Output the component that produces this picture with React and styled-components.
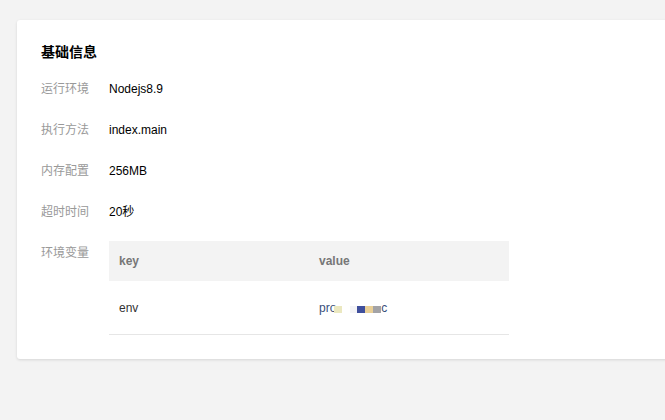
import styled, { createGlobalStyle } from "styled-components"

const Global = createGlobalStyle`
html, body {
  margin: 0;
  padding: 0;
  background: #f3f3f3;
  overflow: hidden;
}
body {
  font-family: "Liberation Sans", "Noto Sans CJK SC", sans-serif;
  font-size: 12px;
  color: #000;
}
`

const Page = styled.div`
padding: 20px 0 0 17px;
width: 720px;
height: 420px;
box-sizing: border-box;
`

const Card = styled.div`
background: #fff;
border-radius: 3px;
box-shadow: 0 1px 3px rgba(0, 0, 0, 0.12);
padding: 21px 24px 24px 24px;
`

const Title = styled.h3`
margin: 0 0 16px 0;
font-size: 14px;
line-height: 22px;
font-weight: 700;
color: #000;
`

const Row = styled.div`
display: flex;
align-items: flex-start;
line-height: 20px;
margin-bottom: ${p => (p.$last ? 0 : 21)}px;
`

const Label = styled.div`
width: 68px;
flex: none;
color: #999;
`

const Value = styled.div`
color: #000;
`

const Table = styled.div`
width: 400px;
margin-top: -2px;
`

const TRow = styled.div`
display: grid;
grid-template-columns: 200px 200px;
align-items: center;
height: ${p => (p.$head ? 40 : 53)}px;
background: ${p => (p.$head ? "#f3f3f3" : "#fff")};
border-bottom: ${p => (p.$head ? "none" : "1px solid #e6e6e6")};
`

const Cell = styled.div`
padding-left: 10px;
color: ${p => (p.$head ? "#777" : "#333")};
font-weight: ${p => (p.$head ? 700 : 400)};
`

const Masked = styled.span`
display: inline-flex;
align-items: center;
color: #3a4f7a;
`

const Block = styled.span`
display: inline-block;
width: ${p => p.$w}px;
height: 7px;
margin-top: 4px;
margin-left: ${p => p.$ml || 0}px;
background: ${p => p.$c};
`

const rows = [
  ["运行环境", "Nodejs8.9"],
  ["执行方法", "index.main"],
  ["内存配置", "256MB"],
  ["超时时间", "20秒"],
]

const App = () => {
  return (
    <Page>
      <Global />
      <Card>
        <Title>基础信息</Title>
        {rows.map(([k, v]) => (
          <Row key={k}>
            <Label>{k}</Label>
            <Value>{v}</Value>
          </Row>
        ))}
        <Row $last>
          <Label>环境变量</Label>
          <Table>
            <TRow $head>
              <Cell $head>key</Cell>
              <Cell $head>value</Cell>
            </TRow>
            <TRow>
              <Cell>env</Cell>
              <Cell>
                <Masked>
                  pro
                  <Block $w={8} $ml={-2} $c="#ebe8c0" />
                  <Block $w={7} $ml={8} $c="#f4f4f6" />
                  <Block $w={8} $c="#3f4f9c" />
                  <Block $w={8} $c="#e9cf96" />
                  <Block $w={8} $c="#a3a3a6" />
                  c
                </Masked>
              </Cell>
            </TRow>
          </Table>
        </Row>
      </Card>
    </Page>
  )
}

export default App
